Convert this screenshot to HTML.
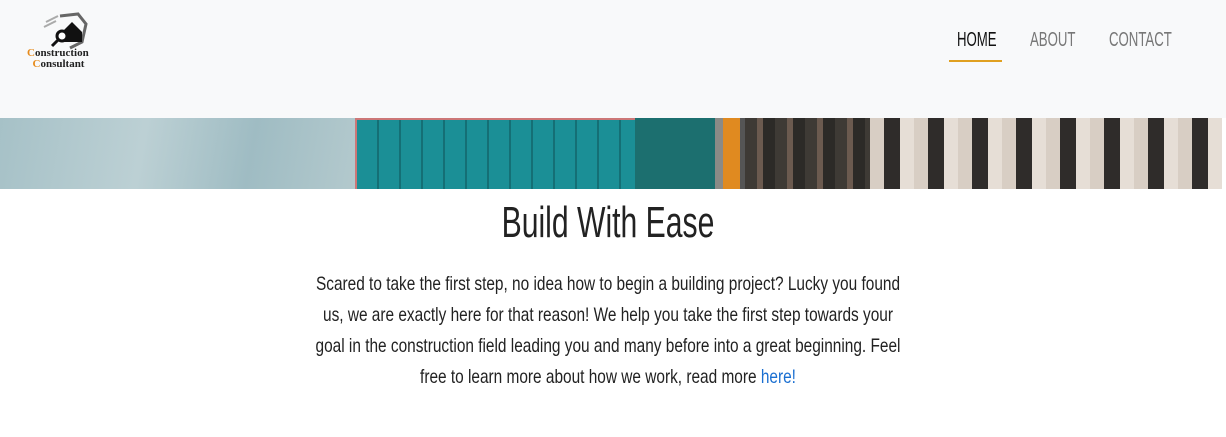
<!DOCTYPE html>
<html><head><style>
body{margin:0;width:1226px;height:437px;background:#fff;overflow:hidden;font-family:"Liberation Sans",sans-serif;position:relative}
.hdr{position:absolute;left:0;top:0;width:1226px;height:118px;background:#f8f9fa}
.nav{position:absolute;top:29px;font-size:20px;color:#777;transform:scaleX(.66);transform-origin:left;white-space:nowrap}
.banner{position:absolute;top:118px;left:0;width:1222px;height:71px;overflow:hidden}
.banner div{position:absolute;top:0;height:71px}
h1{position:absolute;top:198px;left:108px;width:1000px;text-align:center;margin:0;font-weight:normal;font-size:44px;color:#222;transform:scaleX(.685)}
p{position:absolute;top:269px;left:108px;width:1000px;text-align:center;margin:0;font-size:19.5px;line-height:31px;color:#222;transform:scaleX(.79);white-space:nowrap}
a{color:#1a6fd1;text-decoration:none}
</style></head><body>
<div class="hdr">
 <svg style="position:absolute;left:40px;top:10px" width="50" height="40" viewBox="0 0 50 40">
  <path d="M20 6 L38 4 L46 14 L42 32 L30 38" fill="none" stroke="#666" stroke-width="3"/>
  <path d="M6 12 L18 6 M4 17 L16 11" stroke="#aaa" stroke-width="2"/>
  <path d="M22 22 L32 12 L42 22 L42 32 L24 32 Z" fill="#111"/>
  <circle cx="22" cy="26" r="5" fill="#fff" stroke="#111" stroke-width="3"/>
  <path d="M18 30 L12 36" stroke="#111" stroke-width="3"/>
 </svg>
 <div style="position:absolute;left:27px;top:48px;font:bold 11px 'Liberation Serif',serif;line-height:11px;color:#222"><span style="color:#e68a1a">C</span>onstruction<br>&nbsp;&nbsp;<span style="color:#e68a1a">C</span>onsultant</div>
 <div class="nav" style="left:957px;color:#111">HOME</div>
 <div style="position:absolute;left:949px;top:60px;width:53px;height:2px;background:#e0a020"></div>
 <div class="nav" style="left:1030px">ABOUT</div>
 <div class="nav" style="left:1109px">CONTACT</div>
</div>
<div class="banner">
 <div style="left:0;width:355px;background:linear-gradient(100deg,#a6c1c7,#bcd0d4 40%,#9fbcc3 70%,#b3c9cd)"></div>
 <div style="left:355px;width:280px;background:repeating-linear-gradient(90deg,#1b8f96 0 20px,#156f75 20px 22px),#1b8f96;border-left:2px solid #c77;border-top:2px solid #c77"></div>
 <div style="left:635px;width:80px;background:#1c6f6f"></div>
 <div style="left:715px;width:30px;background:linear-gradient(90deg,#8a8a86 0 8px,#e08a20 8px 25px,#555 25px)"></div>
 <div style="left:745px;width:125px;background:repeating-linear-gradient(90deg,#3e3a35 0 12px,#6b5a4f 12px 18px,#2c2a27 18px 30px)"></div>
 <div style="left:870px;width:352px;background:repeating-linear-gradient(90deg,#d8cec4 0 14px,#2f2c2a 14px 30px,#e6ded6 30px 44px)"></div>
</div>
<h1>Build With Ease</h1>
<p>Scared to take the first step, no idea how to begin a building project? Lucky you found<br>us, we are exactly here for that reason! We help you take the first step towards your<br>goal in the construction field leading you and many before into a great beginning. Feel<br>free to learn more about how we work, read more <a>here!</a></p>
</body></html>
